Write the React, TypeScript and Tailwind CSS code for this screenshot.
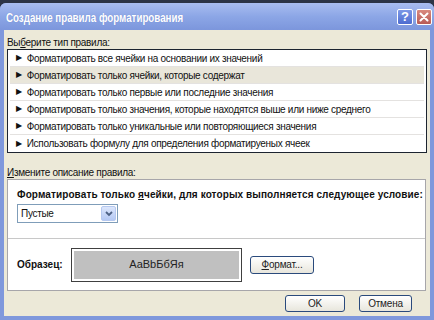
import React from "react";

const items = [
  "Форматировать все ячейки на основании их значений",
  "Форматировать только ячейки, которые содержат",
  "Форматировать только первые или последние значения",
  "Форматировать только значения, которые находятся выше или ниже среднего",
  "Форматировать только уникальные или повторяющиеся значения",
  "Использовать формулу для определения форматируеных ячеек",
];

function XpButton({ children, className = "" }: { children: React.ReactNode; className?: string }) {
  return (
    <div
      className={`flex items-center justify-center rounded-[3px] border border-[#2a4a7c] bg-gradient-to-b from-[#ffffff] to-[#e8e6dc] text-[10px] tracking-[-0.2px] text-[#222] ${className}`}
    >
      {children}
    </div>
  );
}

export default function App() {
  return (
    <div
      className="w-[434px] h-[320px] flex flex-col bg-[#2c3446] overflow-hidden"
      style={{ fontFamily: '"Liberation Sans", Arial, sans-serif' }}
    >
      <div className="h-[3px]" />
      <div className="flex-1 flex flex-col rounded-t-[6px] bg-[#7f98dc] overflow-hidden">
        {/* title bar */}
        <div className="h-[27px] flex items-center pl-[6px] pr-[2px] bg-gradient-to-b from-[#a9bdf0] via-[#8ca6e6] to-[#7c96dc]">
          <div className="flex-1">
            <div
              className="inline-block origin-left scale-x-[0.75] whitespace-nowrap text-white font-bold text-[13px]"
              style={{ textShadow: "0 0 1px #6a82c8" }}
            >
              Создание правила форматирования
            </div>
          </div>
          <div className="flex gap-[3px] items-center">
            <div className="w-[16px] h-[16px] rounded-[2px] border border-white bg-gradient-to-b from-[#7d98e6] to-[#4d6cd0] text-white font-bold text-[13px] leading-[14px] text-center">
              ?
            </div>
            <div className="w-[16px] h-[16px] rounded-[2px] border border-white bg-gradient-to-b from-[#d98a80] to-[#b85a55] flex items-center justify-center">
              <svg width="10" height="10" viewBox="0 0 10 10">
                <path d="M1.5 1.5 L8.5 8.5 M8.5 1.5 L1.5 8.5" stroke="white" strokeWidth="2" strokeLinecap="round" />
              </svg>
            </div>
          </div>
        </div>
        {/* body */}
        <div className="flex-1 flex flex-col mx-[4px] mb-[4px] bg-[#ece9d8] px-[3px] pt-[6px] text-[10px] tracking-[-0.3px] text-[#111]">
          <div className="h-[13px] leading-[13px]">
            Вы<span className="underline">б</span>ерите тип правила:
          </div>
          <div className="w-[420px] border border-[#1c2430] bg-white px-[2px] py-0">
            {items.map((t, i) => (
              <div
                key={i}
                className={`h-[17px] flex items-center pl-[6px] ${i < items.length - 1 ? "border-b border-[#e4e2e0]" : ""} ${i === 1 ? "bg-[#e9e6da]" : ""}`}
              >
                <span className="text-[8px] mr-[5px] text-[#111]">▶</span>
                <span>{t}</span>
              </div>
            ))}
          </div>
          <div className="h-[12px] leading-[12px] mt-[14px]">
            <span className="underline">И</span>змените описание правила:
          </div>
          <div className="w-[419px] h-[112px] flex flex-col bg-white border border-[#a7a6aa]">
            <div className="h-[58px] flex flex-col pl-[9px] pt-[8px]">
              <div className="font-bold text-[10px] leading-[13px] tracking-[0.1px] whitespace-nowrap">
                Форматировать только <span className="underline">я</span>чейки, для которых выполняется следующее условие:
              </div>
              <div className="mt-[3px] w-[101px] h-[19px] border border-[#7f9db9] flex items-center bg-white">
                <span className="flex-1 pl-[3px]">Пустые</span>
                <div className="w-[15px] h-[15px] mr-[1px] rounded-[2px] border border-[#b5c8f0] bg-gradient-to-b from-[#dce6fb] to-[#b4c8f4] flex items-center justify-center">
                  <svg width="8" height="6" viewBox="0 0 8 6">
                    <path d="M1 1 L4 4 L7 1" stroke="#4d6185" strokeWidth="1.8" fill="none" />
                  </svg>
                </div>
              </div>
            </div>
            <div className="flex-1 border-t border-[#c8c8c8] flex items-center pl-[9px]">
              <div className="w-[54px] font-bold tracking-[0px]">Образец:</div>
              <div className="w-[171px] h-[34px] border border-[#404040] p-px">
                <div className="w-full h-full border border-white bg-[#c0c0c0] flex items-center justify-center text-[11px] tracking-[0px] text-[#222]">
                  AaBbБбЯя
                </div>
              </div>
              <XpButton className="ml-[8px] w-[64px] h-[18px]">
                <span>
                  <span className="underline">Ф</span>ормат...
                </span>
              </XpButton>
            </div>
          </div>
          <div className="flex justify-end gap-[14px] mt-[4px] w-[419px] pr-[14px]">
            <XpButton className="w-[60px] h-[17px]">OK</XpButton>
            <XpButton className="w-[53px] h-[17px]">Отмена</XpButton>
          </div>
        </div>
      </div>
    </div>
  );
}
